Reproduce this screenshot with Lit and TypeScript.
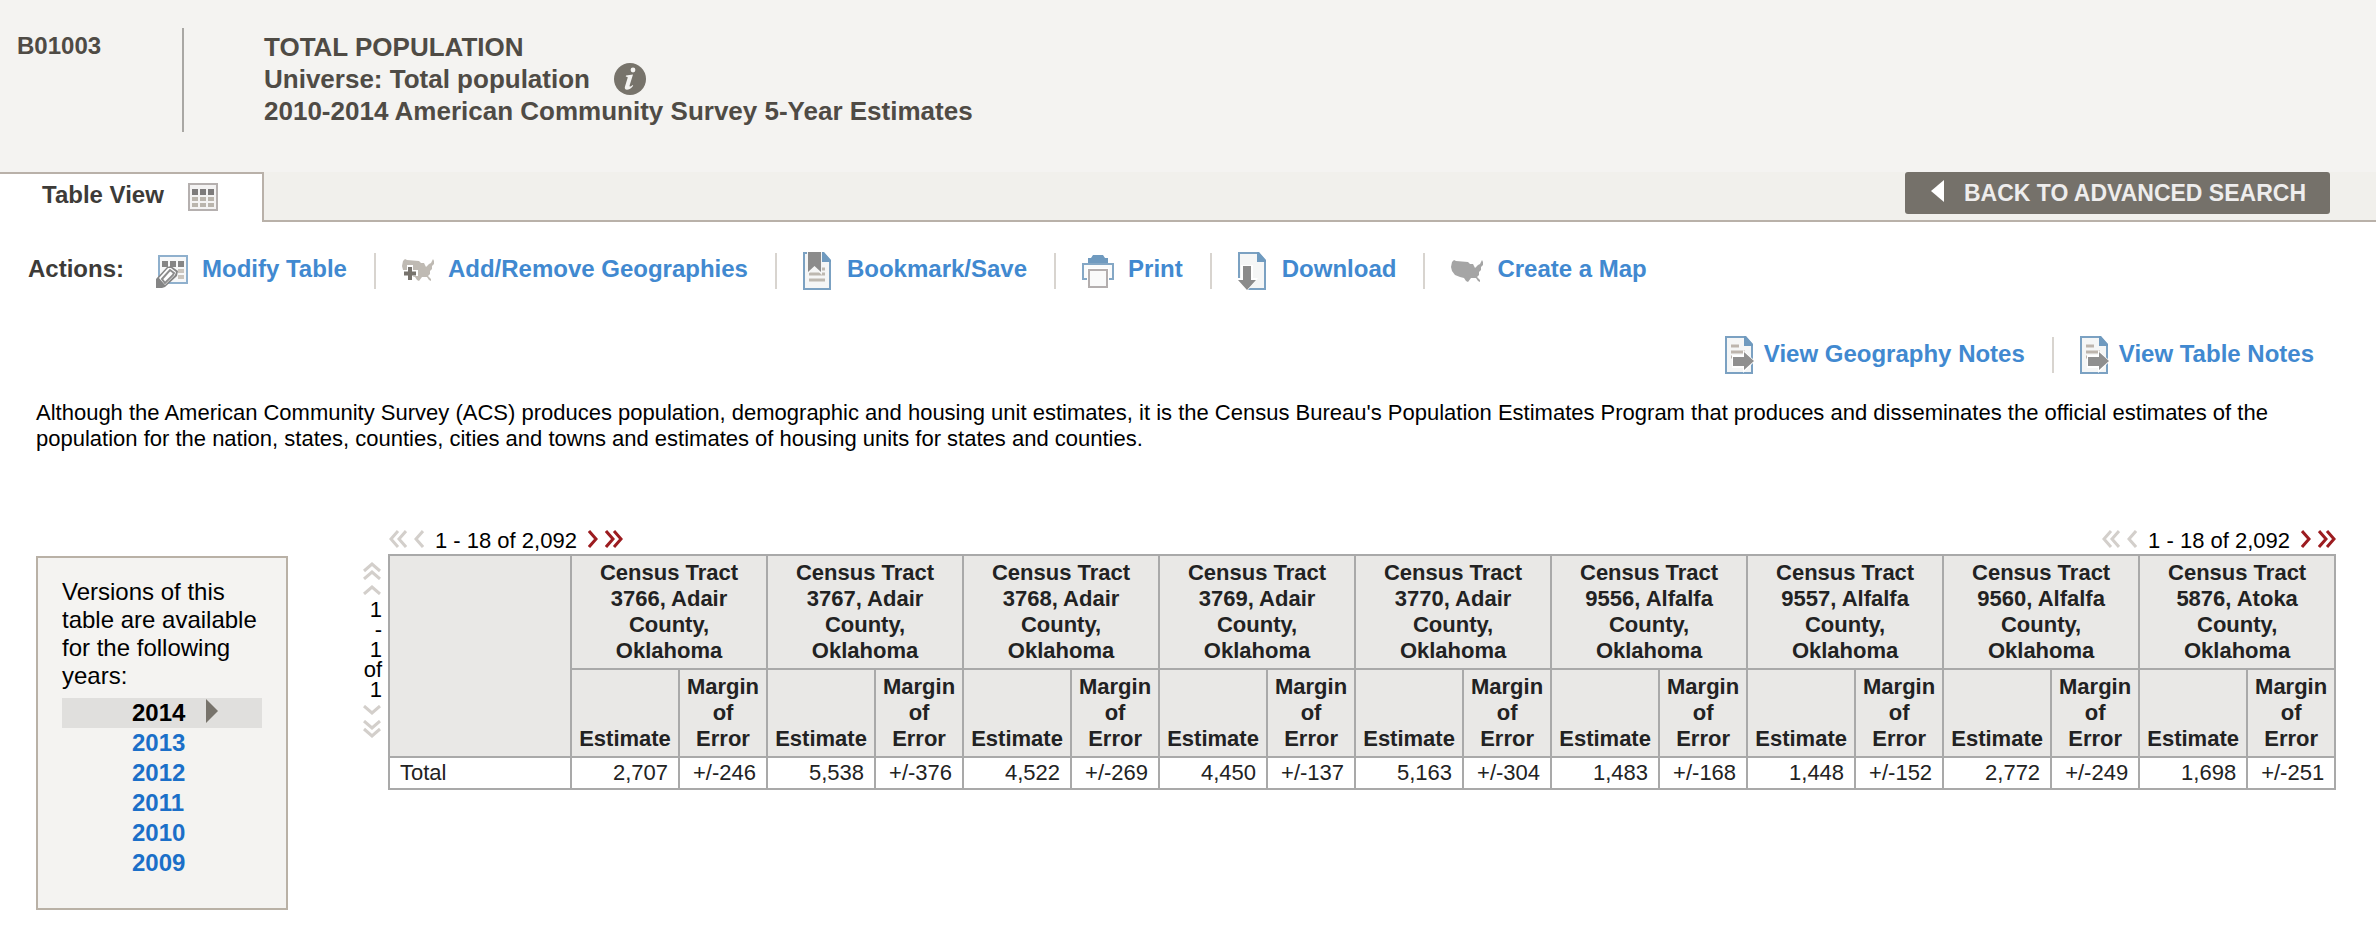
import { LitElement, html, css, svg, nothing } from "lit";
import type { TemplateResult } from "lit";
import { customElement, property } from "lit/decorators.js";

interface Tract {
  name: string;
  estimate: string;
  margin: string;
}

const TRACTS: Tract[] = [
  { name: "Census Tract 3766, Adair County, Oklahoma", estimate: "2,707", margin: "+/-246" },
  { name: "Census Tract 3767, Adair County, Oklahoma", estimate: "5,538", margin: "+/-376" },
  { name: "Census Tract 3768, Adair County, Oklahoma", estimate: "4,522", margin: "+/-269" },
  { name: "Census Tract 3769, Adair County, Oklahoma", estimate: "4,450", margin: "+/-137" },
  { name: "Census Tract 3770, Adair County, Oklahoma", estimate: "5,163", margin: "+/-304" },
  { name: "Census Tract 9556, Alfalfa County, Oklahoma", estimate: "1,483", margin: "+/-168" },
  { name: "Census Tract 9557, Alfalfa County, Oklahoma", estimate: "1,448", margin: "+/-152" },
  { name: "Census Tract 9560, Alfalfa County, Oklahoma", estimate: "2,772", margin: "+/-249" },
  { name: "Census Tract 5876, Atoka County, Oklahoma", estimate: "1,698", margin: "+/-251" },
];

const YEARS = ["2014", "2013", "2012", "2011", "2010", "2009"];

const US_MAP =
  "M1 2 L3 0 L5 1 L17 2 L19 4 L22 4 L24 8 L27 5 L29 4 L31 0 L32 2 L32 5 L30 7 L30 10 L28 12 L28 15 L26 17 L29 20 L29 22 L27 21 L25 18 L20 18 L17 22 L15 21 L13 18 L9 17 L4 15 L1 11 L0 7 Z";

const page = svg`
  <path d="M1 1H20L27 9V37H1Z" fill="#f5f6f6" stroke="#7ba1c2" stroke-width="2"/>
  <path d="M19 0H21L28 8V10H19Z" fill="#6f9abf"/>`;

const calendarGrid = html`<svg width="30" height="28" viewBox="0 0 30 28" aria-hidden="true">
  <rect x="1" y="1" width="28" height="26" fill="#f4f3f3" stroke="#b5b0af" stroke-width="2"/>
  <path d="M4 6h6v6H4zM12 6h6v6h-6zM20 6h6v6h-6z" fill="#7d7b7b"/>
  <path d="M4 14h6v4H4zM12 14h6v4h-6zM20 14h6v4h-6zM4 20h6v4H4zM12 20h6v4h-6zM20 20h6v4h-6z" fill="#bab5ad"/>
</svg>`;

const infoIcon = html`<svg width="32" height="32" viewBox="0 0 32 32" aria-hidden="true">
  <circle cx="16" cy="16" r="16" fill="#77736b"/>
  <circle cx="19" cy="7" r="2.4" fill="#f4f3f1"/>
  <path d="M12 12.5 19 11.5 15.6 22.5c-.4 1.5.8 1.4 3-.6l.6.8c-2.400 3-4.600 4-6.200 4-2 0-2.600-1.300-2-3.200l2.600-8.500c.3-1-.1-1.200-1.800-1.300z" fill="#f4f3f1"/>
</svg>`;

const modifyIcon = html`<svg width="32" height="34" viewBox="0 0 32 34" aria-hidden="true">
  <rect x="3" y="2" width="28" height="27" fill="#f7f8f9" stroke="#8fb0cd" stroke-width="2"/>
  <path d="M6 7h6v6H6zM14 7h6v6h-6zM22 7h6v6h-6z" fill="#858585"/>
  <path d="M22 15h6v4h-6zM22 21h6v4h-6z" fill="#cac5be"/>
  <path d="M0 34V25L11 13 15 12 22 17 21 22 9 33 6 34Z" fill="#858585"/>
  <path d="M3 24 12 14 15 14 20 18 19 21 9 31Z" fill="#fff"/>
  <path d="M6 25 14 16 18 19 17 21 9 29Z" fill="#fff" stroke="#8d8d8d" stroke-width="2"/>
</svg>`;

const addGeoIcon = html`<svg width="32" height="24" viewBox="0 0 32 24" aria-hidden="true">
  <path d=${US_MAP} fill="#bfbab3"/>
  <path d="M5 6h6v5h5v6h-5v5H5v-5H0v-6h5z" fill="#fff"/>
  <path d="M6 8h4v4.500H14v4H10V21H6v-4.500H2v-4h4z" fill="#77736d"/>
</svg>`;

const bookmarkIcon = html`<svg width="30" height="38" viewBox="0 0 30 38" aria-hidden="true">
  ${page}
  <path d="M6 22h16M6 28h16M17 17h5" stroke="#bdb8b0" stroke-width="3"/>
  <path d="M4 0h15v23l-7.500-7L4 23z" fill="#f5f6f6"/>
  <path d="M5 0h13v20l-6.500-6L5 20z" fill="#8b8b8b"/>
</svg>`;

const printIcon = html`<svg width="32" height="34" viewBox="0 0 32 34" aria-hidden="true">
  <path d="M6 10V4h3l2-3h10l2 3h3v6z" fill="#6f9abf"/>
  <path d="M1 10H31V25H1Z" fill="#fafbfb" stroke="#84a7c5" stroke-width="2"/>
  <rect x="5" y="14" width="22" height="13" fill="#fff"/>
  <rect x="7" y="16" width="18" height="17" fill="#fafafa" stroke="#b3aeae" stroke-width="2"/>
</svg>`;

const downloadIcon = html`<svg width="30" height="38" viewBox="0 0 30 38" aria-hidden="true">
  ${page}
  <path d="M3 13h12v13h5L10 38 0 38V26h3z" fill="#fff"/>
  <path d="M5 14h8v14h5L9 38 0 28h5z" fill="#8b8b8b"/>
</svg>`;

const mapIcon = html`<svg width="32" height="22" viewBox="0 0 32 22" aria-hidden="true">
  <path d=${US_MAP} fill="#a5a5a5"/>
</svg>`;

const notesIcon = html`<svg width="30" height="38" viewBox="0 0 30 38" aria-hidden="true">
  ${page}
  <path d="M6 10h8M6 16h14M6 21h8" stroke="#bdb5ad" stroke-width="3"/>
  <path d="M7 19h11v-5L30 25 18 37v-5H7z" fill="#fff"/>
  <path d="M8 21h11v-5l10 9-10 9v-4H8z" fill="#8f8f8f"/>
</svg>`;

const ACTIONS: { label: string; icon: TemplateResult }[] = [
  { label: "Modify Table", icon: modifyIcon },
  { label: "Add/Remove Geographies", icon: addGeoIcon },
  { label: "Bookmark/Save", icon: bookmarkIcon },
  { label: "Print", icon: printIcon },
  { label: "Download", icon: downloadIcon },
  { label: "Create a Map", icon: mapIcon },
];

const NOTES = ["View Geography Notes", "View Table Notes"];

/* Chevron paths, drawn in a box 18 long (double) or 10 long (single) and 18 across. */
const CHEVRONS: Record<string, { w: number; h: number; d: string }> = {
  first: { w: 18, h: 18, d: "M9 1 2 9 9 17M17 1 10 9 17 17" },
  prev: { w: 10, h: 18, d: "M9 1 2 9 9 17" },
  next: { w: 10, h: 18, d: "M1 1 8 9 1 17" },
  last: { w: 18, h: 18, d: "M1 1 8 9 1 17M9 1 16 9 9 17" },
  top: { w: 18, h: 18, d: "M1 9 9 2 17 9M1 17 9 10 17 17" },
  up: { w: 18, h: 10, d: "M1 9 9 2 17 9" },
  down: { w: 18, h: 10, d: "M1 1 9 8 17 1" },
  bottom: { w: 18, h: 18, d: "M1 1 9 8 17 1M1 9 9 16 17 9" },
};

const buttonReset = css`
  button {
    font: inherit;
    color: inherit;
    background: none;
    border: 0;
    padding: 0;
    margin: 0;
    display: block;
    cursor: pointer;
  }
  button:disabled {
    cursor: default;
  }
  svg {
    display: block;
    flex: none;
  }
`;

function chevron(kind: string, label: string, enabled: boolean) {
  const c = CHEVRONS[kind];
  return html`<button type="button" aria-label=${label} ?disabled=${!enabled}>
    <svg width=${c.w} height=${c.h} viewBox="0 0 ${c.w} ${c.h}" aria-hidden="true">
      <path d=${c.d} fill="none" stroke=${enabled ? "#9c1c20" : "#d3cfcb"} stroke-width="3"/>
    </svg>
  </button>`;
}

@customElement("column-pager")
export class ColumnPager extends LitElement {
  static styles = [
    buttonReset,
    css`
      :host {
        display: flex;
        align-items: center;
        gap: 7px;
      }
      .range {
        font-size: 22px;
        line-height: 26px;
        padding: 4px 4px 0 4px;
      }
    `,
  ];

  render() {
    return html`
      ${chevron("first", "First columns", false)} ${chevron("prev", "Previous columns", false)}
      <span class="range">1 - 18 of 2,092</span>
      ${chevron("next", "Next columns", true)} ${chevron("last", "Last columns", true)}
    `;
  }
}

@customElement("row-pager")
export class RowPager extends LitElement {
  static styles = [
    buttonReset,
    css`
      :host {
        display: flex;
        flex-direction: column;
        align-items: flex-start;
        gap: 5px;
        width: 19px;
      }
      .range {
        font-size: 22px;
        line-height: 20px;
        text-align: right;
      }
    `,
  ];

  render() {
    return html`
      ${chevron("top", "First rows", false)} ${chevron("up", "Previous rows", false)}
      <span class="range">1 - 1 of 1</span>
      ${chevron("down", "Next rows", false)} ${chevron("bottom", "Last rows", false)}
    `;
  }
}

@customElement("year-list")
export class YearList extends LitElement {
  @property({ attribute: false }) years: string[] = [];
  @property() current = "";

  static styles = css`
    :host {
      display: block;
      box-sizing: border-box;
      border: 2px solid #b9b1a6;
      background: #f4f3f1;
      padding: 20px 24px 30px;
      font-size: 24px;
    }
    .intro {
      margin: 0 0 8px;
      line-height: 28px;
    }
    .years {
      list-style: none;
      margin: 0;
      padding: 0;
      font-weight: bold;
      line-height: 30px;
    }
    .year {
      display: flex;
      align-items: center;
      gap: 21px;
      padding-left: 70px;
    }
    .current {
      background: #e0dfdd;
    }
    a {
      color: #1b6fc8;
      text-decoration: none;
    }
    svg {
      display: block;
      margin-bottom: 4px;
    }
  `;

  render() {
    return html`
      <p class="intro">Versions of this table are available for the following years:</p>
      <ul class="years">
        ${this.years.map((year) =>
          year === this.current
            ? html`<li class="year current" aria-current="true">
                ${year}
                <svg width="12" height="24" viewBox="0 0 12 24" aria-hidden="true">
                  <path d="M0 0 12 12 0 24Z" fill="#77736b"/>
                </svg>
              </li>`
            : html`<li class="year"><a href="#${year}">${year}</a></li>`
        )}
      </ul>
    `;
  }
}

@customElement("app-root")
export class AppRoot extends LitElement {
  static styles = [
    buttonReset,
    css`
      :host {
        display: block;
        font-family: "Liberation Sans", Arial, Helvetica, sans-serif;
        color: #000;
        background: #fff;
      }
      a {
        color: #4189d0;
        text-decoration: none;
      }
      .header {
        display: flex;
        align-items: flex-start;
        background: #f4f3f1;
        padding: 28px 17px 40px;
        font-weight: bold;
        color: #4f4b45;
      }
      .code {
        box-sizing: border-box;
        width: 167px;
        height: 104px;
        border-right: 2px solid #a9a7a4;
        font-size: 24px;
        line-height: 35px;
      }
      .titles {
        padding-left: 80px;
        padding-top: 3px;
      }
      .title {
        margin: 0;
        font-size: 26px;
        line-height: 32px;
        font-weight: bold;
      }
      .universe {
        display: flex;
        align-items: center;
        gap: 24px;
      }
      .tabs {
        display: flex;
        justify-content: space-between;
        height: 50px;
        background: #f1f0ec;
        font-weight: bold;
        font-size: 24px;
      }
      .tab {
        display: flex;
        align-items: center;
        gap: 24px;
        box-sizing: border-box;
        width: 264px;
        padding: 0 0 2px 42px;
        border-top: 2px solid #b9b1a9;
        border-right: 2px solid #b9b1a9;
        background: #fff;
        color: #3d3b38;
      }
      .tab-label {
        padding-bottom: 4px;
      }
      .bar {
        flex: 1;
        display: flex;
        justify-content: flex-end;
        align-items: flex-start;
        padding-right: 46px;
        border-bottom: 2px solid #b9b1a9;
      }
      .back {
        display: flex;
        align-items: center;
        gap: 20px;
        height: 42px;
        padding: 0 24px 0 26px;
        border-radius: 3px;
        background: #75716a;
        color: #eeeded;
        font-size: 23px;
      }
      .back svg {
        margin-bottom: 4px;
      }
      .links {
        display: flex;
        align-items: center;
        font-size: 24px;
        line-height: 30px;
        font-weight: bold;
      }
      .actions {
        padding: 30px 28px 0;
      }
      .actions-label {
        color: #3d3b38;
        margin-right: 32px;
        padding-bottom: 4px;
      }
      .link {
        display: flex;
        align-items: center;
        gap: 14px;
      }
      .link-text {
        padding-bottom: 4px;
      }
      .separator {
        width: 2px;
        height: 36px;
        margin: 0 26px 0 27px;
        background: #d8d4cf;
      }
      .notes {
        justify-content: flex-end;
        padding: 46px 62px 0 0;
      }
      .notes .link {
        gap: 9px;
      }
      .notes .link-text {
        padding-bottom: 3px;
      }
      .about {
        margin: 0;
        padding: 26px 36px 0;
        font-size: 22px;
        line-height: 26px;
      }
      .main {
        display: flex;
        align-items: flex-start;
        padding: 72px 40px 16px 36px;
      }
      .versions {
        flex: none;
        width: 252px;
        margin-top: 32px;
      }
      .rows {
        flex: none;
        margin: 38px 6px 0 75px;
      }
      .results {
        flex: 1;
        min-width: 0;
      }
      .pagers {
        display: flex;
        justify-content: space-between;
        padding-left: 1px;
      }
      .data {
        width: 100%;
        table-layout: fixed;
        border-collapse: collapse;
        color: #222;
        font-size: 22px;
        line-height: 26px;
      }
      .col-label {
        width: 182px;
      }
      .col-estimate {
        width: 108px;
      }
      .col-margin {
        width: 88px;
      }
      .data th,
      .data td {
        border: 2px solid #a9a9a9;
      }
      .data thead th,
      .data thead td {
        background: #e9e8e6;
        padding: 4px 6px;
        vertical-align: bottom;
      }
      .data tbody th,
      .data tbody td {
        padding: 2px 10px;
        font-weight: normal;
        text-align: right;
      }
      .data tbody th {
        text-align: left;
      }
    `,
  ];

  render() {
    return html`
      <header class="header">
        <div class="code">B01003</div>
        <div class="titles">
          <h1 class="title">TOTAL POPULATION</h1>
          <div class="title universe">
            Universe: Total population
            <button type="button" aria-label="About this table">${infoIcon}</button>
          </div>
          <div class="title">2010-2014 American Community Survey 5-Year Estimates</div>
        </div>
      </header>

      <div class="tabs">
        <div class="tab"><span class="tab-label">Table View</span>${calendarGrid}</div>
        <div class="bar">
          <button type="button" class="back">
            <svg width="13" height="22" viewBox="0 0 13 22" aria-hidden="true">
              <path d="M13 0V22L0 11Z" fill="#fff"/>
            </svg>
            BACK TO ADVANCED SEARCH
          </button>
        </div>
      </div>

      <nav class="links actions" aria-label="Actions">
        <span class="actions-label">Actions:</span>
        ${ACTIONS.map(
          (action, i) => html`
            ${i > 0 ? html`<span class="separator"></span>` : nothing}
            <a class="link" href="#action">${action.icon}<span class="link-text">${action.label}</span></a>
          `
        )}
      </nav>

      <nav class="links notes" aria-label="Notes">
        ${NOTES.map(
          (label, i) => html`
            ${i > 0 ? html`<span class="separator"></span>` : nothing}
            <a class="link" href="#notes">${notesIcon}<span class="link-text">${label}</span></a>
          `
        )}
      </nav>

      <p class="about">
        Although the American Community Survey (ACS) produces population, demographic and housing
        unit estimates, it is the Census Bureau's Population Estimates Program that produces and
        disseminates the official estimates of the population for the nation, states, counties,
        cities and towns and estimates of housing units for states and counties.
      </p>

      <main class="main">
        <year-list class="versions" .years=${YEARS} current="2014"></year-list>
        <row-pager class="rows"></row-pager>
        <section class="results">
          <div class="pagers">
            <column-pager></column-pager>
            <column-pager></column-pager>
          </div>
          <table class="data">
            <colgroup>
              <col class="col-label" />
              ${TRACTS.map(() => html`<col class="col-estimate" /><col class="col-margin" />`)}
            </colgroup>
            <thead>
              <tr>
                <td rowspan="2"></td>
                ${TRACTS.map((t) => html`<th colspan="2" scope="colgroup">${t.name}</th>`)}
              </tr>
              <tr>
                ${TRACTS.map(
                  () => html`<th scope="col">Estimate</th><th scope="col">Margin of Error</th>`
                )}
              </tr>
            </thead>
            <tbody>
              <tr>
                <th scope="row">Total</th>
                ${TRACTS.map((t) => html`<td>${t.estimate}</td><td>${t.margin}</td>`)}
              </tr>
            </tbody>
          </table>
        </section>
      </main>
    `;
  }
}
